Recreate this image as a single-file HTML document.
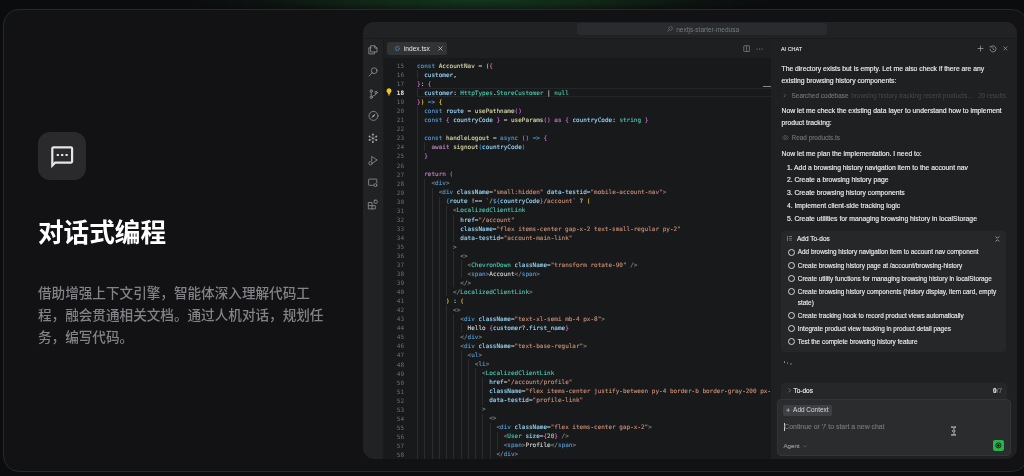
<!DOCTYPE html>
<html lang="zh-CN">
<head>
<meta charset="utf-8">
<title>对话式编程</title>
<style>
*{box-sizing:border-box;margin:0;padding:0}
html,body{width:1024px;height:476px;overflow:hidden}
body{background:#0b0c0d;font-family:"Liberation Sans","Noto Sans CJK SC",sans-serif;position:relative;color:#fff}
#glow{position:absolute;left:190px;top:-16px;width:580px;height:32px;background:radial-gradient(ellipse at 50% 50%,rgba(19,54,29,1) 0%,rgba(17,44,25,.8) 30%,rgba(13,24,18,.5) 55%,rgba(11,12,13,0) 75%)}
#left{position:absolute;left:0;top:0}
#stage{position:absolute;left:0;top:0;width:1024px;height:476px;will-change:transform}
#card{position:absolute;left:3px;top:9px;width:1025px;height:463px;border:1px solid #25282c;border-radius:16px;background:#121214}
#ico{position:absolute;left:38px;top:132px;width:48px;height:48px;border-radius:12px;background:#2a2a2c}
#ico svg{position:absolute;left:11.3px;top:11.7px;width:26.4px;height:26.4px}
h2{position:absolute;left:38px;top:213.5px;font-size:25.6px;line-height:38px;font-weight:700;color:#fff;white-space:nowrap;font-family:"Liberation Sans","Noto Sans CJK SC",sans-serif}
p.desc{position:absolute;left:38px;top:282.6px;font-size:13.6px;line-height:22.4px;font-weight:500;color:#828287;white-space:nowrap}

#ide{position:absolute;left:362.5px;top:21.5px;width:654px;height:437.3px;border-radius:11px;background:#18191b;overflow:hidden}
#title{position:absolute;left:0;top:0;width:100%;height:17px;background:#202224;border-bottom:1px solid #1a1b1d}
#search{position:absolute;left:214.5px;top:1.8px;width:250.3px;height:12.2px;border-radius:3px;background:#2a2b2e;color:#77797c;font-size:6.5px;line-height:12.2px;white-space:nowrap}
#search span{position:absolute;left:99.2px;top:.8px}
#search svg{position:absolute;left:89.5px;top:3px;width:6px;height:6px}
#act{position:absolute;left:0;top:17px;width:21px;bottom:0;background:#202224;border-right:1px solid #1a1b1d}
#act svg{position:absolute;fill:none;stroke:#a2a4a7;stroke-width:.7;stroke-linecap:round;stroke-linejoin:round}
#act .fl{fill:#a2a4a7;stroke:none}
#tabs{position:absolute;left:21px;top:17px;width:387px;height:19.6px;background:#1e1f21}
#tab{position:absolute;left:3.8px;top:3.6px;width:59.6px;height:12.8px;border-radius:2.5px;background:#323335;font-size:6.6px;line-height:12.6px;color:#e4e4e4;white-space:nowrap}
#tab span{position:absolute;left:16.6px;top:.8px}
#tabs svg{position:absolute}
#editor{position:absolute;left:21px;top:36.6px;width:387.1px;bottom:0;background:#18191b;overflow:hidden}
#nums{position:absolute;left:0;top:2.9px;width:20.6px;text-align:right;font-family:"DejaVu Sans Mono","Liberation Mono",monospace;font-size:6px;line-height:9.043px;color:#6c6f75}
#nums .cur{color:#e8e8e8;font-weight:700}
#code{-webkit-text-stroke:.1px;position:absolute;left:33.5px;top:2.9px;width:360px;font-family:"DejaVu Sans Mono","Liberation Mono",monospace;font-size:6.01px;line-height:9.043px;white-space:pre;color:#d4d4d4}
#code .ln{height:9.043px}
#code i{position:absolute;width:.7px;background:#2b2c2f}
.k{color:#569cd6}.f{color:#dcdcaa}.v{color:#9cdcfe}.t{color:#4ec9b0}.s{color:#ce9178}.c{color:#c586c0}.w{color:#d4d4d4}.g{color:#808080}.b1{color:#ffd700}.b2{color:#da70d6}.b3{color:#179fff}.n{color:#b5cea8}
#curline{position:absolute;left:33.5px;right:0;top:30.2px;height:9.2px;border-top:1px solid #242527;border-bottom:1px solid #242527}
#bulb{position:absolute;left:2.6px;top:30.2px;width:6px;height:8px}
#mark{position:absolute;right:0;top:28.1px;width:7.5px;height:1px;background:#8a8a8a}

#chat{position:absolute;left:408.1px;top:17px;right:0;bottom:0;background:#1f2022;font-size:6.8px;color:#e9e9e9;white-space:nowrap}
#chat div,#chat span,#chat svg{position:absolute}
.hd{left:10.4px;top:5px;font-size:5.45px;line-height:10px;font-weight:400;-webkit-text-stroke:.18px;color:#dcdcdc}
.m{left:10.8px;line-height:11.6px;-webkit-text-stroke:.16px}
.sub{color:#707275;font-size:6.4px;line-height:10px;-webkit-text-stroke:.14px}
.dim{color:#47494c;-webkit-text-stroke:0}
.li{left:16.2px;line-height:12.8px;-webkit-text-stroke:.16px}
#todo{left:10.4px;top:192.8px;width:225.6px;height:120.4px;border-radius:4px;background:#262729;font-size:6.4px}
.td{left:17px;line-height:11px;color:#ececec;-webkit-text-stroke:.14px}
.ck{left:7.6px;width:7px;height:7px;border:.6px solid #d4d4d4;border-radius:50%}
#tbar{left:10.4px;top:344.4px;width:225.6px;height:20px;border-radius:4px 4px 0 0;background:#262729;font-size:6.5px}
#inp{left:6.4px;top:360px;width:234px;height:56.6px;border-radius:4px;background:#2a2c2e;border:1px solid #333537}
#ctx{left:5.4px;top:5.6px;width:49px;height:10.6px;border-radius:2px;background:#3d3f42;color:#dadada;font-size:6.45px;line-height:10.6px}
#go{left:215.2px;top:40.8px;width:11.2px;height:11.2px;border-radius:2px;background:#2bb24c}
</style>
</head>
<body>
<div id="glow"></div>
<div id="card"></div>
<div id="stage">
<div id="left">
  <div id="ico"><svg viewBox="0 0 24 24"><path fill="#e6e6e6" d="M20 2H4c-1.100 0-2 .9-2 2v18l4-4h14c1.100 0 2-.9 2-2V4c0-1.100-.9-2-2-2zm0 14H5.170L4 17.170V4h16v12zM7 9h2v2H7zm4 0h2v2h-2zm4 0h2v2h-2z"/></svg></div>
  <h2>对话式编程</h2>
  <p class="desc">借助增强上下文引擎，智能体深入理解代码工<br>程，融会贯通相关文档。通过人机对话，规划任<br>务，编写代码。</p>
</div>

<div id="ide">
  <div id="title">
    <div id="search"><svg viewBox="0 0 12 12"><circle cx="7.200" cy="4.800" r="3.600" fill="none" stroke="#77797c" stroke-width="1.200"/><path d="M4.600 7.400L1 11" stroke="#77797c" stroke-width="1.200" fill="none" stroke-linecap="round"/></svg><span>nextjs-starter-medusa</span></div>
  </div>
  <div id="act">
    <svg viewBox="363 38.5 21 420.3" style="left:0;top:0;width:21px;height:420.3px"><path d="M371 45.300h3.700l2.300 2.300v3.900h-6zM374.700 45.300v2.300h2.300M371 47.300h-2.200v6.100h5.600v-1.900"/><circle cx="374.2" cy="70.2" r="2.9"/><path d="M372.1 72.3L369.1 75.600"/><circle cx="371.200" cy="90.500" r="1.200"/><circle cx="371.200" cy="96.800" r="1.200"/><circle cx="376.100" cy="92" r="1.200"/><path d="M371.200 91.700V95.600M376.100 93.200c0 2.100-3.200 1.700-4.100 2.800"/><circle cx="373.500" cy="115.400" r="4.500"/><path class="fl" d="M375.600 113.300l-1.500 2.700-2.700 1.500 1.500-2.700z"/><path d="M372.9 134.100v7.300M369.600 136.100l6.700 3.500M376.300 136.100l-6.700 3.500" stroke-width=".4"/><circle class="fl" cx="372.9" cy="134.100" r="1"/><circle class="fl" cx="372.9" cy="141.400" r="1"/><circle class="fl" cx="369.600" cy="136.100" r="1"/><circle class="fl" cx="376.300" cy="136.100" r="1"/><circle class="fl" cx="369.600" cy="139.600" r="1"/><circle class="fl" cx="376.300" cy="139.600" r="1"/><circle class="fl" cx="372.9" cy="137.800" r=".9"/><path d="M371.7 160.200V156l5.500 3.500-4 2.600"/><circle cx="370.500" cy="162.700" r="1.700"/><path d="M373.400 184.800h-4.300a.5.5 0 0 1-.5-.5v-5.200a.5.5 0 0 1 .5-.5h7.200a.5.5 0 0 1 .5.500v3.400"/><circle cx="375.400" cy="184.700" r="1.500"/><path d="M368.700 202h3.300v3.200h3.300v3.200h-6.600zM368.700 205.200h3.300v3.200"/><rect x="374.100" y="199.700" width="3.100" height="3.100" rx=".7"/></svg>
  </div>
  <div id="tabs">
    <div id="tab">
      <svg viewBox="0 0 12 12" style="left:6.400px;top:3.200px;width:6.800px;height:6.800px"><circle cx="6" cy="6" r="4" fill="none" stroke="#47799e" stroke-width="2" stroke-dasharray="1.600 1.540"/><circle cx="6" cy="6" r="2.600" fill="none" stroke="#47799e" stroke-width="1.100"/></svg>
      <span>index.tsx</span>
      <svg viewBox="0 0 10 10" style="left:50.4px;top:3.8px;width:5px;height:5px"><path d="M1 1l8 8M9 1l-8 8" stroke="#d6d6d6" stroke-width="1.300" fill="none"/></svg>
    </div>
    <svg viewBox="0 0 14 14" style="left:359.4px;top:6.2px;width:7.400px;height:7.400px"><rect x="1.500" y="1.500" width="11" height="11" rx="1" fill="none" stroke="#8d8f92" stroke-width="1.300"/><path d="M7 1.500v11" stroke="#8d8f92" stroke-width="1.300"/></svg>
    <svg viewBox="0 0 14 4" style="left:372.4px;top:9px;width:7px;height:2px"><circle cx="2" cy="2" r="1.200" fill="#8d8f92"/><circle cx="7" cy="2" r="1.200" fill="#8d8f92"/><circle cx="12" cy="2" r="1.200" fill="#8d8f92"/></svg>
  </div>
  <div id="editor">
    <div id="curline"></div>
    <svg id="bulb" viewBox="0 0 12 16"><path fill="#f6c31c" d="M6 .5a5 5 0 0 0-3 9c.5.400.8 1 .8 1.600V12h4.400v-.9c0-.6.300-1.200.8-1.600A5 5 0 0 0 6 .5z"/><rect x="3.800" y="12.800" width="4.400" height="1.200" fill="#c9a227"/><rect x="4.400" y="14.500" width="3.200" height="1" fill="#c9a227"/></svg>
    <div id="mark"></div>
    <div id="nums"><div>15</div><div>16</div><div>17</div><div class="cur">18</div><div>19</div><div>20</div><div>21</div><div>22</div><div>23</div><div>24</div><div>25</div><div>26</div><div>27</div><div>28</div><div>29</div><div>30</div><div>31</div><div>32</div><div>33</div><div>34</div><div>35</div><div>36</div><div>37</div><div>38</div><div>39</div><div>40</div><div>41</div><div>42</div><div>43</div><div>44</div><div>45</div><div>46</div><div>47</div><div>48</div><div>49</div><div>50</div><div>51</div><div>52</div><div>53</div><div>54</div><div>55</div><div>56</div><div>57</div><div>58</div></div>
<div id="code"><i style="left:0.20px;top:9.04px;height:9.04px"></i><i style="left:0.20px;top:27.13px;height:9.04px"></i><i style="left:0.20px;top:45.21px;height:352.68px"></i><i style="left:7.44px;top:81.39px;height:9.04px"></i><i style="left:7.44px;top:117.56px;height:280.33px"></i><i style="left:14.67px;top:126.60px;height:271.29px"></i><i style="left:21.91px;top:135.64px;height:262.25px"></i><i style="left:29.14px;top:144.69px;height:90.43px"></i><i style="left:29.14px;top:244.16px;height:153.73px"></i><i style="left:36.38px;top:153.73px;height:27.13px"></i><i style="left:36.38px;top:189.90px;height:36.17px"></i><i style="left:36.38px;top:253.20px;height:144.69px"></i><i style="left:43.62px;top:198.95px;height:18.09px"></i><i style="left:43.62px;top:262.25px;height:9.04px"></i><i style="left:43.62px;top:289.38px;height:108.52px"></i><i style="left:50.85px;top:298.42px;height:99.47px"></i><i style="left:58.09px;top:307.46px;height:90.43px"></i><i style="left:65.32px;top:316.50px;height:27.13px"></i><i style="left:65.32px;top:352.68px;height:45.21px"></i><i style="left:72.56px;top:361.72px;height:36.17px"></i><i style="left:79.80px;top:370.76px;height:18.09px"></i><div class="ln"><span class="k">const </span><span class="f">AccountNav</span><span class="w"> = </span><span class="b1">(</span><span class="b2">{</span></div><div class="ln"><span class="v">  customer</span><span class="w">,</span></div><div class="ln"><span class="b2">}</span><span class="w">: </span><span class="b2">{</span></div><div class="ln"><span class="v">  customer</span><span class="w">: </span><span class="t">HttpTypes</span><span class="w">.</span><span class="t">StoreCustomer</span><span class="w"> | </span><span class="t">null</span></div><div class="ln"><span class="b2">}</span><span class="b1">)</span><span class="k"> =&gt; </span><span class="b1">{</span></div><div class="ln"><span class="k">  const </span><span class="v">route</span><span class="w"> = </span><span class="f">usePathname</span><span class="b2">()</span></div><div class="ln"><span class="k">  const </span><span class="b2">{ </span><span class="v">countryCode</span><span class="b2"> }</span><span class="w"> = </span><span class="f">useParams</span><span class="b2">()</span><span class="c"> as </span><span class="b2">{ </span><span class="v">countryCode</span><span class="w">: </span><span class="t">string</span><span class="b2"> }</span></div><div class="ln"></div><div class="ln"><span class="k">  const </span><span class="f">handleLogout</span><span class="w"> = </span><span class="k">async </span><span class="b2">()</span><span class="k"> =&gt; </span><span class="b2">{</span></div><div class="ln"><span class="c">    await </span><span class="f">signout</span><span class="b3">(</span><span class="v">countryCode</span><span class="b3">)</span></div><div class="ln"><span class="b2">  }</span></div><div class="ln"></div><div class="ln"><span class="c">  return </span><span class="b2">(</span></div><div class="ln"><span class="g">    &lt;</span><span class="k">div</span><span class="g">&gt;</span></div><div class="ln"><span class="g">      &lt;</span><span class="k">div </span><span class="v">className</span><span class="w">=</span><span class="s">&quot;small:hidden&quot; </span><span class="v">data-testid</span><span class="w">=</span><span class="s">&quot;mobile-account-nav&quot;</span><span class="g">&gt;</span></div><div class="ln"><span class="b3">        {</span><span class="v">route</span><span class="w"> !== </span><span class="s">`/</span><span class="k">${</span><span class="v">countryCode</span><span class="k">}</span><span class="s">/account`</span><span class="w"> ? </span><span class="b1">(</span></div><div class="ln"><span class="g">          &lt;</span><span class="t">LocalizedClientLink</span></div><div class="ln"><span class="v">            href</span><span class="w">=</span><span class="s">&quot;/account&quot;</span></div><div class="ln"><span class="v">            className</span><span class="w">=</span><span class="s">&quot;flex items-center gap-x-2 text-small-regular py-2&quot;</span></div><div class="ln"><span class="v">            data-testid</span><span class="w">=</span><span class="s">&quot;account-main-link&quot;</span></div><div class="ln"><span class="g">          &gt;</span></div><div class="ln"><span class="g">            &lt;&gt;</span></div><div class="ln"><span class="g">              &lt;</span><span class="t">ChevronDown </span><span class="v">className</span><span class="w">=</span><span class="s">&quot;transform rotate-90&quot; </span><span class="g">/&gt;</span></div><div class="ln"><span class="g">              &lt;</span><span class="k">span</span><span class="g">&gt;</span><span class="w">Account</span><span class="g">&lt;/</span><span class="k">span</span><span class="g">&gt;</span></div><div class="ln"><span class="g">            &lt;/&gt;</span></div><div class="ln"><span class="g">          &lt;/</span><span class="t">LocalizedClientLink</span><span class="g">&gt;</span></div><div class="ln"><span class="b1">        )</span><span class="w"> : </span><span class="b1">(</span></div><div class="ln"><span class="g">          &lt;&gt;</span></div><div class="ln"><span class="g">            &lt;</span><span class="k">div </span><span class="v">className</span><span class="w">=</span><span class="s">&quot;text-xl-semi mb-4 px-8&quot;</span><span class="g">&gt;</span></div><div class="ln"><span class="w">              Hello </span><span class="b2">{</span><span class="v">customer</span><span class="w">?.</span><span class="v">first_name</span><span class="b2">}</span></div><div class="ln"><span class="g">            &lt;/</span><span class="k">div</span><span class="g">&gt;</span></div><div class="ln"><span class="g">            &lt;</span><span class="k">div </span><span class="v">className</span><span class="w">=</span><span class="s">&quot;text-base-regular&quot;</span><span class="g">&gt;</span></div><div class="ln"><span class="g">              &lt;</span><span class="k">ul</span><span class="g">&gt;</span></div><div class="ln"><span class="g">                &lt;</span><span class="k">li</span><span class="g">&gt;</span></div><div class="ln"><span class="g">                  &lt;</span><span class="t">LocalizedClientLink</span></div><div class="ln"><span class="v">                    href</span><span class="w">=</span><span class="s">&quot;/account/profile&quot;</span></div><div class="ln"><span class="v">                    className</span><span class="w">=</span><span class="s">&quot;flex items-center justify-between py-4 border-b border-gray-200 px-8&quot;</span></div><div class="ln"><span class="v">                    data-testid</span><span class="w">=</span><span class="s">&quot;profile-link&quot;</span></div><div class="ln"><span class="g">                  &gt;</span></div><div class="ln"><span class="g">                    &lt;&gt;</span></div><div class="ln"><span class="g">                      &lt;</span><span class="k">div </span><span class="v">className</span><span class="w">=</span><span class="s">&quot;flex items-center gap-x-2&quot;</span><span class="g">&gt;</span></div><div class="ln"><span class="g">                        &lt;</span><span class="t">User </span><span class="v">size</span><span class="w">=</span><span class="b2">{</span><span class="n">20</span><span class="b2">}</span><span class="g"> /&gt;</span></div><div class="ln"><span class="g">                        &lt;</span><span class="k">span</span><span class="g">&gt;</span><span class="w">Profile</span><span class="g">&lt;/</span><span class="k">span</span><span class="g">&gt;</span></div><div class="ln"><span class="g">                      &lt;/</span><span class="k">div</span><span class="g">&gt;</span></div></div>
  </div>
  <div id="chat">
    <div class="hd" style="left:10.4px;top:5.5px;">AI CHAT</div>
    <svg viewBox="0 0 12 12" style="left:206.5px;top:6.5px;width:7px;height:7px"><path d="M6 1v10M1 6h10" stroke="#b4b6b9" stroke-width="1.1" fill="none"/></svg>
    <svg viewBox="0 0 16 16" style="left:218.0px;top:6.3px;width:8px;height:8px"><path d="M3.200 4.200A6 6 0 1 1 2 8" stroke="#b4b6b9" stroke-width="1.300" fill="none"/><path d="M1 2.200l2.300 2.300 2.500-1.400" stroke="#b4b6b9" stroke-width="1.200" fill="none"/><path d="M8 4.500V8.300l2.400 1.600" stroke="#b4b6b9" stroke-width="1.200" fill="none"/></svg>
    <svg viewBox="0 0 10 10" style="left:232.6px;top:7.6px;width:4.8px;height:4.8px"><path d="M1 1l8 8M9 1l-8 8" stroke="#b4b6b9" stroke-width="1.200" fill="none"/></svg>
    <div class="m" style="left:10.9px;top:24.6px;">The directory exists but is empty. Let me also check if there are any<br>existing browsing history components:</div>
    <svg viewBox="0 0 6 10" style="left:12.7px;top:54.8px;width:3.4px;height:4.8px"><path d="M1 1l4 4-4 4" stroke="#707275" stroke-width="1.3" fill="none"/></svg>
    <div class="sub" style="left:21.0px;top:52.2px;">Searched codebase</div>
    <div class="sub dim" style="left:80.6px;top:52.2px;">browsing history tracking recent products...</div>
    <div class="sub dim" style="left:207.6px;top:52.2px;">20 results</div>
    <div class="m" style="left:10.9px;top:66.6px;">Now let me check the existing data layer to understand how to implement<br>product tracking:</div>
    <svg viewBox="0 0 16 12" style="left:11.4px;top:96.6px;width:6.8px;height:5.2px"><path d="M1 6c2-3.400 4.400-5 7-5s5 1.600 7 5c-2 3.400-4.400 5-7 5S3 9.400 1 6z" stroke="#707275" stroke-width="1.4" fill="none"/><circle cx="8" cy="6" r="2.200" stroke="#707275" stroke-width="1.400" fill="none"/></svg>
    <div class="sub" style="left:21.0px;top:94.2px;">Read products.ts</div>
    <div class="m" style="left:10.9px;top:109.6px;">Now let me plan the implementation. I need to:</div>
    <div class="li" style="left:16.3px;top:123.1px;">1. Add a browsing history navigation item to the account nav</div>
    <div class="li" style="left:16.3px;top:135.9px;">2. Create a browsing history page</div>
    <div class="li" style="left:16.3px;top:148.7px;">3. Create browsing history components</div>
    <div class="li" style="left:16.3px;top:161.5px;">4. Implement client-side tracking logic</div>
    <div class="li" style="left:16.3px;top:174.3px;">5. Create utilities for managing browsing history in localStorage</div>
    <div id="todo" style="left:10.4px;top:192.5px;width:225.5px;height:120.6px">
    <svg viewBox="0 0 10 10" style="left:5.9px;top:4.7px;width:5.6px;height:5.6px"><path d="M.7 0v10M3.500 1h6.500M3.500 5h6.500M3.500 9h6.500" stroke="#a4a6a9" stroke-width="1.200" fill="none"/></svg>
    <div class="td" style="left:16.0px;top:2.0px;font-size:6.5px">Add To-dos</div>
    <svg viewBox="0 0 8 10" style="left:214.1px;top:4.5px;width:4.8px;height:6px"><path d="M1 .8l3 3 3-3M1 9.200l3-3 3 3" stroke="#c4c4c4" stroke-width="1.200" fill="none"/></svg>
    <div class="ck" style="left:7.4px;top:17.5px"></div>
    <div class="td" style="left:16.8px;top:15.4px;">Add browsing history navigation item to account nav component</div>
    <div class="ck" style="left:7.4px;top:30.7px"></div>
    <div class="td" style="left:16.8px;top:28.6px;">Create browsing history page at /account/browsing-history</div>
    <div class="ck" style="left:7.4px;top:43.8px"></div>
    <div class="td" style="left:16.8px;top:41.7px;">Create utility functions for managing browsing history in localStorage</div>
    <div class="ck" style="left:7.4px;top:56.9px"></div>
    <div class="td" style="left:16.8px;top:54.8px;">Create browsing history components (history display, item card, empty<br>state)</div>
    <div class="ck" style="left:7.4px;top:80.9px"></div>
    <div class="td" style="left:16.8px;top:78.8px;">Create tracking hook to record product views automatically</div>
    <div class="ck" style="left:7.4px;top:94.0px"></div>
    <div class="td" style="left:16.8px;top:91.9px;">Integrate product view tracking in product detail pages</div>
    <div class="ck" style="left:7.4px;top:107.1px"></div>
    <div class="td" style="left:16.8px;top:105.0px;">Test the complete browsing history feature</div>
    </div>
    <div style="left:13.1px;top:322.7px;width:1.6px;height:1.6px;border-radius:50%;background:#909295"></div>
    <div style="left:16.3px;top:323.9px;width:1.6px;height:1.6px;border-radius:50%;background:#6c6e71"></div>
    <div style="left:19.5px;top:324.9px;width:1.6px;height:1.6px;border-radius:50%;background:#56585b"></div>
    <div id="tbar" style="left:10.8px;top:344.4px;width:225.2px;height:20px">
    <svg viewBox="0 0 6 10" style="left:6.2px;top:5.6px;width:3.4px;height:4.8px"><path d="M1 1l4 4-4 4" stroke="#97999c" stroke-width="1.300" fill="none"/></svg>
    <div class="td" style="left:12.0px;top:2.5px;font-size:6.5px">To-dos</div>
    <div class="td" style="right:4.6px;top:2.5px;font-size:6.4px;left:auto"><b style="color:#eee;font-weight:700">0</b><span style="position:static;color:#7d7f82">/7</span></div>
    </div>
    <div id="inp" style="left:6.5px;top:360.1px;width:233.8px;height:57.4px">
    <div id="ctx" style="left:5.0px;top:5.5px;width:48.9px;height:10.6px"><svg viewBox="0 0 10 10" style="left:3px;top:3.1px;width:4.4px;height:4.4px"><path d="M5 .5v9M.5 5h9" stroke="#dadada" stroke-width="1.300" fill="none"/></svg><span style="left:10px;top:0">Add Context</span></div>
    <div style="left:5.5px;top:23.6px;width:.6px;height:7.4px;background:#cfcfcf"></div>
    <div class="sub" style="left:6.2px;top:22.4px;font-size:6.9px;color:#76787b">Continue or '/' to start a new chat</div>
    <div class="sub" style="left:5.3px;top:41.4px;font-size:6.2px;color:#96989b">Agent</div>
    <svg viewBox="0 0 8 5" style="left:24.8px;top:45.4px;width:4px;height:2.6px"><path d="M1 1l3 3 3-3" stroke="#6f7174" stroke-width="1.200" fill="none"/></svg>
    <div id="go" style="left:215.0px;top:40.6px"><svg viewBox="0 0 12 12" style="left:2.2px;top:2.2px;width:6.8px;height:6.8px"><circle cx="6" cy="6" r="4.500" fill="none" stroke="#07190c" stroke-width="1.500"/><circle cx="6" cy="6" r="2.200" fill="#07190c"/></svg></div>
    <svg viewBox="0 0 11 20" style="left:172.7px;top:26.3px;width:5.5px;height:9.9px"><path d="M1.500 2c2.500 0 4 .3 4 2v12c0 1.700-1.500 2-4 2M9.500 2c-2.500 0-4 .3-4 2v12c0 1.700 1.500 2 4 2M3.500 10h4" stroke="#e8e8e8" stroke-width="2.800" fill="none" stroke-linecap="round"/><path d="M1.500 2c2.500 0 4 .3 4 2v12c0 1.700-1.500 2-4 2M9.500 2c-2.500 0-4 .3-4 2v12c0 1.700 1.500 2 4 2M3.500 10h4" stroke="#2a2c2e" stroke-width=".9" fill="none"/></svg>
    </div>
  </div>
</div>
</div>
</body>
</html>
